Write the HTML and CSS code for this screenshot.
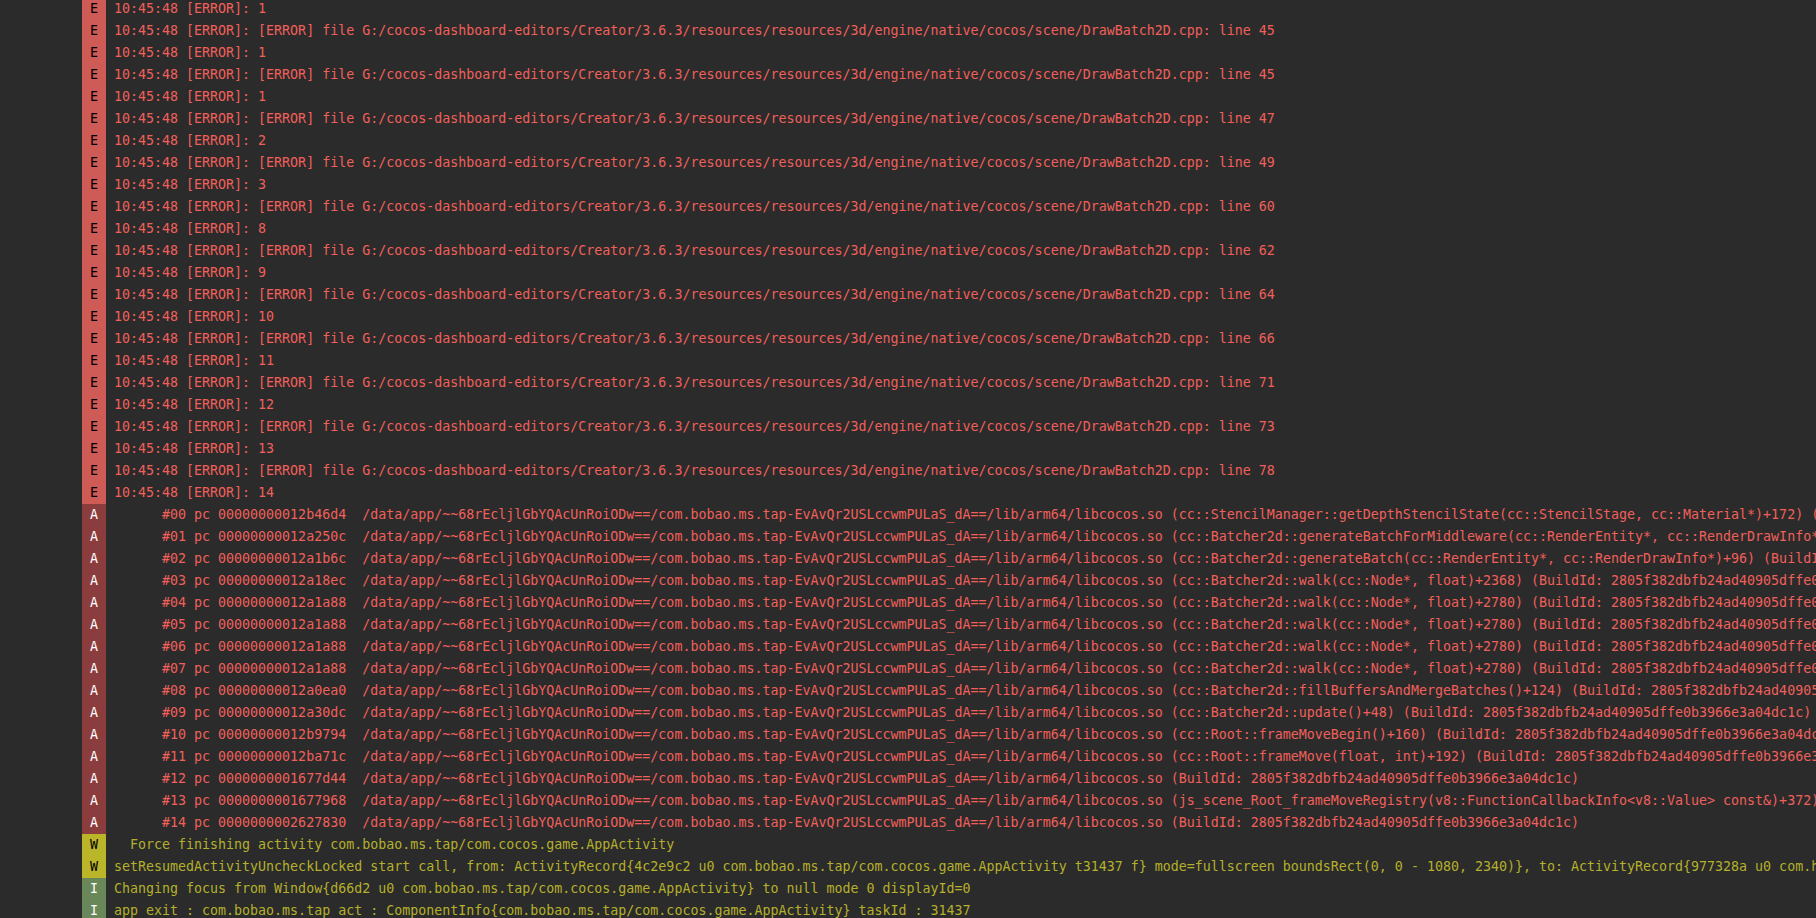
FILE: index.html
```html
<!DOCTYPE html>
<html>
<head>
<meta charset="utf-8">
<link rel="stylesheet" href="styles.css">
</head>
<body>
<div class="log">
<div class="row e"><span class="lv">E</span><span class="msg">10:45:48 [ERROR]: 1</span></div>
<div class="row e"><span class="lv">E</span><span class="msg">10:45:48 [ERROR]: [ERROR] file G:/cocos-dashboard-editors/Creator/3.6.3/resources/resources/3d/engine/native/cocos/scene/DrawBatch2D.cpp: line 45</span></div>
<div class="row e"><span class="lv">E</span><span class="msg">10:45:48 [ERROR]: 1</span></div>
<div class="row e"><span class="lv">E</span><span class="msg">10:45:48 [ERROR]: [ERROR] file G:/cocos-dashboard-editors/Creator/3.6.3/resources/resources/3d/engine/native/cocos/scene/DrawBatch2D.cpp: line 45</span></div>
<div class="row e"><span class="lv">E</span><span class="msg">10:45:48 [ERROR]: 1</span></div>
<div class="row e"><span class="lv">E</span><span class="msg">10:45:48 [ERROR]: [ERROR] file G:/cocos-dashboard-editors/Creator/3.6.3/resources/resources/3d/engine/native/cocos/scene/DrawBatch2D.cpp: line 47</span></div>
<div class="row e"><span class="lv">E</span><span class="msg">10:45:48 [ERROR]: 2</span></div>
<div class="row e"><span class="lv">E</span><span class="msg">10:45:48 [ERROR]: [ERROR] file G:/cocos-dashboard-editors/Creator/3.6.3/resources/resources/3d/engine/native/cocos/scene/DrawBatch2D.cpp: line 49</span></div>
<div class="row e"><span class="lv">E</span><span class="msg">10:45:48 [ERROR]: 3</span></div>
<div class="row e"><span class="lv">E</span><span class="msg">10:45:48 [ERROR]: [ERROR] file G:/cocos-dashboard-editors/Creator/3.6.3/resources/resources/3d/engine/native/cocos/scene/DrawBatch2D.cpp: line 60</span></div>
<div class="row e"><span class="lv">E</span><span class="msg">10:45:48 [ERROR]: 8</span></div>
<div class="row e"><span class="lv">E</span><span class="msg">10:45:48 [ERROR]: [ERROR] file G:/cocos-dashboard-editors/Creator/3.6.3/resources/resources/3d/engine/native/cocos/scene/DrawBatch2D.cpp: line 62</span></div>
<div class="row e"><span class="lv">E</span><span class="msg">10:45:48 [ERROR]: 9</span></div>
<div class="row e"><span class="lv">E</span><span class="msg">10:45:48 [ERROR]: [ERROR] file G:/cocos-dashboard-editors/Creator/3.6.3/resources/resources/3d/engine/native/cocos/scene/DrawBatch2D.cpp: line 64</span></div>
<div class="row e"><span class="lv">E</span><span class="msg">10:45:48 [ERROR]: 10</span></div>
<div class="row e"><span class="lv">E</span><span class="msg">10:45:48 [ERROR]: [ERROR] file G:/cocos-dashboard-editors/Creator/3.6.3/resources/resources/3d/engine/native/cocos/scene/DrawBatch2D.cpp: line 66</span></div>
<div class="row e"><span class="lv">E</span><span class="msg">10:45:48 [ERROR]: 11</span></div>
<div class="row e"><span class="lv">E</span><span class="msg">10:45:48 [ERROR]: [ERROR] file G:/cocos-dashboard-editors/Creator/3.6.3/resources/resources/3d/engine/native/cocos/scene/DrawBatch2D.cpp: line 71</span></div>
<div class="row e"><span class="lv">E</span><span class="msg">10:45:48 [ERROR]: 12</span></div>
<div class="row e"><span class="lv">E</span><span class="msg">10:45:48 [ERROR]: [ERROR] file G:/cocos-dashboard-editors/Creator/3.6.3/resources/resources/3d/engine/native/cocos/scene/DrawBatch2D.cpp: line 73</span></div>
<div class="row e"><span class="lv">E</span><span class="msg">10:45:48 [ERROR]: 13</span></div>
<div class="row e"><span class="lv">E</span><span class="msg">10:45:48 [ERROR]: [ERROR] file G:/cocos-dashboard-editors/Creator/3.6.3/resources/resources/3d/engine/native/cocos/scene/DrawBatch2D.cpp: line 78</span></div>
<div class="row e"><span class="lv">E</span><span class="msg">10:45:48 [ERROR]: 14</span></div>
<div class="row a"><span class="lv">A</span><span class="msg">      #00 pc 00000000012b46d4  /data/app/~~68rEcljlGbYQAcUnRoiODw==/com.bobao.ms.tap-EvAvQr2USLccwmPULaS_dA==/lib/arm64/libcocos.so (cc::StencilManager::getDepthStencilState(cc::StencilStage, cc::Material*)+172) (BuildId: 2805f382dbfb24ad40905dffe0b3966e3a04dc1c)</span></div>
<div class="row a"><span class="lv">A</span><span class="msg">      #01 pc 00000000012a250c  /data/app/~~68rEcljlGbYQAcUnRoiODw==/com.bobao.ms.tap-EvAvQr2USLccwmPULaS_dA==/lib/arm64/libcocos.so (cc::Batcher2d::generateBatchForMiddleware(cc::RenderEntity*, cc::RenderDrawInfo*)+196) (BuildId: 2805f382dbfb24ad40905dffe0b3966e3a04dc1c)</span></div>
<div class="row a"><span class="lv">A</span><span class="msg">      #02 pc 00000000012a1b6c  /data/app/~~68rEcljlGbYQAcUnRoiODw==/com.bobao.ms.tap-EvAvQr2USLccwmPULaS_dA==/lib/arm64/libcocos.so (cc::Batcher2d::generateBatch(cc::RenderEntity*, cc::RenderDrawInfo*)+96) (BuildId: 2805f382dbfb24ad40905dffe0b3966e3a04dc1c)</span></div>
<div class="row a"><span class="lv">A</span><span class="msg">      #03 pc 00000000012a18ec  /data/app/~~68rEcljlGbYQAcUnRoiODw==/com.bobao.ms.tap-EvAvQr2USLccwmPULaS_dA==/lib/arm64/libcocos.so (cc::Batcher2d::walk(cc::Node*, float)+2368) (BuildId: 2805f382dbfb24ad40905dffe0b3966e3a04dc1c)</span></div>
<div class="row a"><span class="lv">A</span><span class="msg">      #04 pc 00000000012a1a88  /data/app/~~68rEcljlGbYQAcUnRoiODw==/com.bobao.ms.tap-EvAvQr2USLccwmPULaS_dA==/lib/arm64/libcocos.so (cc::Batcher2d::walk(cc::Node*, float)+2780) (BuildId: 2805f382dbfb24ad40905dffe0b3966e3a04dc1c)</span></div>
<div class="row a"><span class="lv">A</span><span class="msg">      #05 pc 00000000012a1a88  /data/app/~~68rEcljlGbYQAcUnRoiODw==/com.bobao.ms.tap-EvAvQr2USLccwmPULaS_dA==/lib/arm64/libcocos.so (cc::Batcher2d::walk(cc::Node*, float)+2780) (BuildId: 2805f382dbfb24ad40905dffe0b3966e3a04dc1c)</span></div>
<div class="row a"><span class="lv">A</span><span class="msg">      #06 pc 00000000012a1a88  /data/app/~~68rEcljlGbYQAcUnRoiODw==/com.bobao.ms.tap-EvAvQr2USLccwmPULaS_dA==/lib/arm64/libcocos.so (cc::Batcher2d::walk(cc::Node*, float)+2780) (BuildId: 2805f382dbfb24ad40905dffe0b3966e3a04dc1c)</span></div>
<div class="row a"><span class="lv">A</span><span class="msg">      #07 pc 00000000012a1a88  /data/app/~~68rEcljlGbYQAcUnRoiODw==/com.bobao.ms.tap-EvAvQr2USLccwmPULaS_dA==/lib/arm64/libcocos.so (cc::Batcher2d::walk(cc::Node*, float)+2780) (BuildId: 2805f382dbfb24ad40905dffe0b3966e3a04dc1c)</span></div>
<div class="row a"><span class="lv">A</span><span class="msg">      #08 pc 00000000012a0ea0  /data/app/~~68rEcljlGbYQAcUnRoiODw==/com.bobao.ms.tap-EvAvQr2USLccwmPULaS_dA==/lib/arm64/libcocos.so (cc::Batcher2d::fillBuffersAndMergeBatches()+124) (BuildId: 2805f382dbfb24ad40905dffe0b3966e3a04dc1c)</span></div>
<div class="row a"><span class="lv">A</span><span class="msg">      #09 pc 00000000012a30dc  /data/app/~~68rEcljlGbYQAcUnRoiODw==/com.bobao.ms.tap-EvAvQr2USLccwmPULaS_dA==/lib/arm64/libcocos.so (cc::Batcher2d::update()+48) (BuildId: 2805f382dbfb24ad40905dffe0b3966e3a04dc1c)</span></div>
<div class="row a"><span class="lv">A</span><span class="msg">      #10 pc 00000000012b9794  /data/app/~~68rEcljlGbYQAcUnRoiODw==/com.bobao.ms.tap-EvAvQr2USLccwmPULaS_dA==/lib/arm64/libcocos.so (cc::Root::frameMoveBegin()+160) (BuildId: 2805f382dbfb24ad40905dffe0b3966e3a04dc1c)</span></div>
<div class="row a"><span class="lv">A</span><span class="msg">      #11 pc 00000000012ba71c  /data/app/~~68rEcljlGbYQAcUnRoiODw==/com.bobao.ms.tap-EvAvQr2USLccwmPULaS_dA==/lib/arm64/libcocos.so (cc::Root::frameMove(float, int)+192) (BuildId: 2805f382dbfb24ad40905dffe0b3966e3a04dc1c)</span></div>
<div class="row a"><span class="lv">A</span><span class="msg">      #12 pc 0000000001677d44  /data/app/~~68rEcljlGbYQAcUnRoiODw==/com.bobao.ms.tap-EvAvQr2USLccwmPULaS_dA==/lib/arm64/libcocos.so (BuildId: 2805f382dbfb24ad40905dffe0b3966e3a04dc1c)</span></div>
<div class="row a"><span class="lv">A</span><span class="msg">      #13 pc 0000000001677968  /data/app/~~68rEcljlGbYQAcUnRoiODw==/com.bobao.ms.tap-EvAvQr2USLccwmPULaS_dA==/lib/arm64/libcocos.so (js_scene_Root_frameMoveRegistry(v8::FunctionCallbackInfo&lt;v8::Value&gt; const&amp;)+372) (BuildId: 2805f382dbfb24ad40905dffe0b3966e3a04dc1c)</span></div>
<div class="row a"><span class="lv">A</span><span class="msg">      #14 pc 0000000002627830  /data/app/~~68rEcljlGbYQAcUnRoiODw==/com.bobao.ms.tap-EvAvQr2USLccwmPULaS_dA==/lib/arm64/libcocos.so (BuildId: 2805f382dbfb24ad40905dffe0b3966e3a04dc1c)</span></div>
<div class="row w"><span class="lv">W</span><span class="msg">  Force finishing activity com.bobao.ms.tap/com.cocos.game.AppActivity</span></div>
<div class="row w"><span class="lv">W</span><span class="msg">setResumedActivityUncheckLocked start call, from: ActivityRecord{4c2e9c2 u0 com.bobao.ms.tap/com.cocos.game.AppActivity t31437 f} mode=fullscreen boundsRect(0, 0 - 1080, 2340)}, to: ActivityRecord{977328a u0 com.huawei.android.launcher/.unihome.UniHomeLauncher t31301}</span></div>
<div class="row i"><span class="lv">I</span><span class="msg">Changing focus from Window{d66d2 u0 com.bobao.ms.tap/com.cocos.game.AppActivity} to null mode 0 displayId=0</span></div>
<div class="row i"><span class="lv">I</span><span class="msg">app exit : com.bobao.ms.tap act : ComponentInfo{com.bobao.ms.tap/com.cocos.game.AppActivity} taskId : 31437</span></div>
</div>
</body>
</html>
```

FILE: styles.css
```css
html, body {
  margin: 0;
  padding: 0;
  background: #2b2b2b;
  overflow: hidden;
  height: 100%;
}

.log {
  margin-top: -2px;
  padding-left: 82px;
  font-family: "DejaVu Sans Mono", "Liberation Mono", monospace;
  font-size: 13.3px;
}

.row {
  display: flex;
  height: 22px;
  line-height: 22px;
  white-space: pre;
}

.lv {
  flex: 0 0 24px;
  width: 24px;
  text-align: center;
}

.msg {
  padding-left: 8px;
  overflow: hidden;
}

.e .lv { background: #cf5b56; color: #000000; }
.e .msg { color: #f0605b; }

.a .lv { background: #8b3c3c; color: #ffffff; }
.a .msg { color: #f0605b; }

.w .lv { background: #bbb529; color: #000000; }
.w .msg { color: #b5b02c; }

.i .lv { background: #6a8759; color: #ffffff; }
.i .msg { color: #b5b02c; }
```
